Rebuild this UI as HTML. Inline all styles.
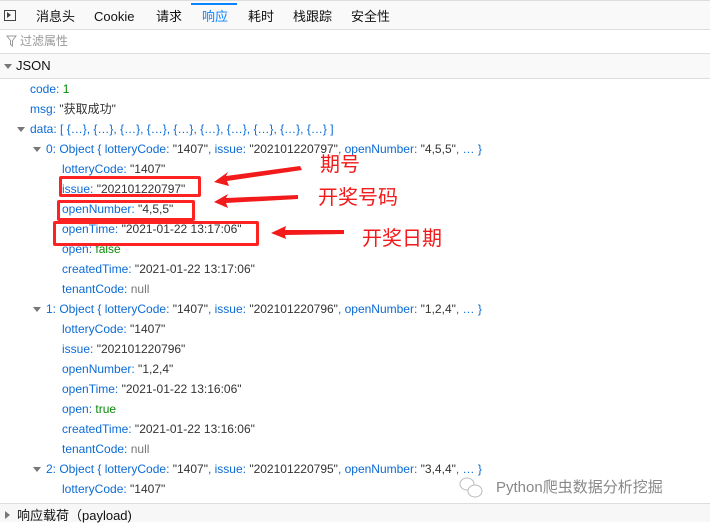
<!DOCTYPE html>
<html><head><meta charset="utf-8"><style>
body{margin:0;width:710px;height:521px;overflow:hidden;background:#fff;font-family:"Liberation Sans","Noto Sans CJK SC",sans-serif;font-size:12px;color:#333;position:relative}
.a{position:absolute;white-space:nowrap;line-height:18px}
.t{top:8px;font-size:13px;color:#111}
.k{color:#0b6bd6}.s{color:#333}.g{color:#068a06}.n{color:#777}
.r{position:absolute;line-height:20px;height:20px;white-space:nowrap}
.tri{position:absolute;width:0;height:0;border-left:4px solid transparent;border-right:4px solid transparent;border-top:5px solid #777}
.box{position:absolute;border:3px solid #f22;border-radius:2px}
.lbl{position:absolute;color:#f21a1a;font-size:20px;line-height:24px;font-family:"Noto Sans CJK SC",sans-serif;white-space:nowrap}
</style></head><body>
<div class="a" style="left:0;top:0;width:710px;height:30px;background:#f9f9fa;border-top:1px solid #ddd;border-bottom:1px solid #ddd;box-sizing:border-box"></div>
<div class="a" style="left:191px;top:3px;width:46px;height:2px;background:#0a84ff"></div>
<div class="a" style="left:4px;top:10px;width:12px;height:11px;border:1px solid #444;box-sizing:border-box"></div>
<div class="a" style="left:7px;top:12px;width:0;height:0;border-top:3.5px solid transparent;border-bottom:3.5px solid transparent;border-left:4px solid #444"></div>
<div class="a t" style="left:36px">消息头</div>
<div class="a t" style="left:94px">Cookie</div>
<div class="a t" style="left:156px">请求</div>
<div class="a t" style="left:202px;color:#0a84ff">响应</div>
<div class="a t" style="left:248px">耗时</div>
<div class="a t" style="left:293px">栈跟踪</div>
<div class="a t" style="left:351px">安全性</div>
<svg class="a" style="left:6px;top:35px" width="11" height="12"><path d="M1 1H10L6.5 5.5V11L4.5 9.5V5.5Z" fill="none" stroke="#999" stroke-width="1"/></svg>
<div class="a" style="left:20px;top:32px;color:#999">过滤属性</div>
<div class="a" style="left:0;top:53px;width:710px;height:26px;background:#f9f9fa;border-top:1px solid #ddd;border-bottom:1px solid #ddd;box-sizing:border-box"></div>
<div class="tri" style="left:4px;top:64px"></div>
<div class="a" style="left:16px;top:57px;font-size:13px;color:#111">JSON</div>

<div class="r" style="left:30px;top:79px"><span class="k">code:</span> <span class="g">1</span></div>
<div class="r" style="left:30px;top:99px"><span class="k">msg:</span> "获取成功"</div>
<div class="tri" style="left:17px;top:127px"></div>
<div class="r" style="left:30px;top:119px"><span class="k">data: [ {…}, {…}, {…}, {…}, {…}, {…}, {…}, {…}, {…}, {…} ]</span></div>

<div class="tri" style="left:33px;top:147px"></div>
<div class="r" style="left:46px;top:139px"><span class="k">0: Object { lotteryCode:</span> "1407"<span class="k">, issue:</span> "202101220797"<span class="k">, openNumber:</span> "4,5,5"<span class="k">, … }</span></div>
<div class="r" style="left:62px;top:159px"><span class="k">lotteryCode:</span> "1407"</div>
<div class="r" style="left:62px;top:179px"><span class="k">issue:</span> "202101220797"</div>
<div class="r" style="left:62px;top:199px"><span class="k">openNumber:</span> "4,5,5"</div>
<div class="r" style="left:62px;top:219px"><span class="k">openTime:</span> "2021-01-22 13:17:06"</div>
<div class="r" style="left:62px;top:239px"><span class="k">open:</span> <span class="g">false</span></div>
<div class="r" style="left:62px;top:259px"><span class="k">createdTime:</span> "2021-01-22 13:17:06"</div>
<div class="r" style="left:62px;top:279px"><span class="k">tenantCode:</span> <span class="n">null</span></div>

<div class="tri" style="left:33px;top:307px"></div>
<div class="r" style="left:46px;top:299px"><span class="k">1: Object { lotteryCode:</span> "1407"<span class="k">, issue:</span> "202101220796"<span class="k">, openNumber:</span> "1,2,4"<span class="k">, … }</span></div>
<div class="r" style="left:62px;top:319px"><span class="k">lotteryCode:</span> "1407"</div>
<div class="r" style="left:62px;top:339px"><span class="k">issue:</span> "202101220796"</div>
<div class="r" style="left:62px;top:359px"><span class="k">openNumber:</span> "1,2,4"</div>
<div class="r" style="left:62px;top:379px"><span class="k">openTime:</span> "2021-01-22 13:16:06"</div>
<div class="r" style="left:62px;top:399px"><span class="k">open:</span> <span class="g">true</span></div>
<div class="r" style="left:62px;top:419px"><span class="k">createdTime:</span> "2021-01-22 13:16:06"</div>
<div class="r" style="left:62px;top:439px"><span class="k">tenantCode:</span> <span class="n">null</span></div>

<div class="tri" style="left:33px;top:467px"></div>
<div class="r" style="left:46px;top:459px"><span class="k">2: Object { lotteryCode:</span> "1407"<span class="k">, issue:</span> "202101220795"<span class="k">, openNumber:</span> "3,4,4"<span class="k">, … }</span></div>
<div class="r" style="left:62px;top:479px"><span class="k">lotteryCode:</span> "1407"</div>

<div class="box" style="left:59px;top:176px;width:136px;height:15px"></div>
<div class="box" style="left:57px;top:200px;width:132px;height:15px"></div>
<div class="box" style="left:53px;top:221px;width:200px;height:19px"></div>
<svg class="a" style="left:0;top:0" width="710" height="521">
<g fill="#f21a1a">
<polygon points="300,166 226,176 228,172 214,182 229,186 227,181 302,170"/>
<polygon points="298,195 226,198 228,194 214,202 228,208 226,203 298,199"/>
<polygon points="344,230 285,230 286,226 271,233 286,239 285,235 344,234"/>
</g>
<g fill="none" stroke="#bbb" stroke-width="1">
<ellipse cx="467" cy="484" rx="7" ry="6"/>
<ellipse cx="475" cy="491" rx="7" ry="6" fill="#fff"/>
</g>
</svg>
<div class="lbl" style="left:320px;top:151px">期号</div>
<div class="lbl" style="left:318px;top:184px">开奖号码</div>
<div class="lbl" style="left:362px;top:225px">开奖日期</div>

<div class="a" style="left:496px;top:479px;font-size:15px;color:#888">Python爬虫数据分析挖掘</div>

<div class="a" style="left:0;top:503px;width:710px;height:18px;background:#f7f7f7;border-top:1px solid #ddd"></div>
<div class="a" style="left:5px;top:511px;width:0;height:0;border-top:4px solid transparent;border-bottom:4px solid transparent;border-left:5px solid #777"></div>
<div class="a" style="left:17px;top:507px;font-size:13px;color:#111">响应载荷（payload)</div>
</body></html>
